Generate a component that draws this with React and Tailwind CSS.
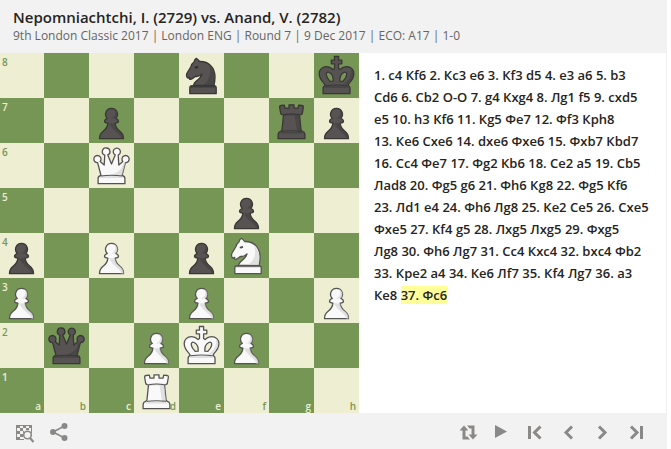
const files = ['a', 'b', 'c', 'd', 'e', 'f', 'g', 'h']

const position = {
  e8: 'bn', h8: 'bk', c7: 'bp', g7: 'br', h7: 'bp', c6: 'wq', f5: 'bp',
  a4: 'bp', c4: 'wp', e4: 'bp', f4: 'wn', a3: 'wp', e3: 'wp', h3: 'wp',
  b2: 'bq', d2: 'wp', e2: 'wk', f2: 'wp', d1: 'wr',
}

const moves = [
  '1. c4 Кf6 2. Кc3 e6 3. Кf3 d5 4. e3 a6 5. b3',
  'Сd6 6. Сb2 O-O 7. g4 Кxg4 8. Лg1 f5 9. cxd5',
  'e5 10. h3 Кf6 11. Кg5 Фe7 12. Фf3 Крh8',
  '13. Кe6 Сxe6 14. dxe6 Фxe6 15. Фxb7 Кbd7',
  '16. Сc4 Фe7 17. Фg2 Кb6 18. Сe2 a5 19. Сb5',
  'Лad8 20. Фg5 g6 21. Фh6 Кg8 22. Фg5 Кf6',
  '23. Лd1 e4 24. Фh6 Лg8 25. Кe2 Сe5 26. Сxe5',
  'Фxe5 27. Кf4 g5 28. Лxg5 Лxg5 29. Фxg5',
  'Лg8 30. Фh6 Лg7 31. Сc4 Кxc4 32. bxc4 Фb2',
  '33. Крe2 a4 34. Кe6 Лf7 35. Кf4 Лg7 36. a3',
]

// piece outlines on a 45x45 square
const shapes = {
  p: {
    body: 'M22.5 10.3a5.9 5.9 0 0 1 4.2 10.1c1.8.8 2.8 1.8 2.8 2.9 0 1-1 1.6-3.4 1.8.3 4 2 6 4.8 8.2 2.6 2 3.7 4.3 3.6 7.4H10.5c-.1-3.1 1-5.4 3.6-7.4 2.8-2.2 4.5-4.2 4.8-8.2-2.4-.2-3.4-.8-3.4-1.8 0-1.1 1-2.1 2.8-2.9a5.900 5.900 0 0 1 4.200-10.100z',
    shade: 'M20 25.200h6.100c.3 4 2 6 4.800 8.100 2.600 2 3.700 4.300 3.600 7.400h-2c-.5-5-8-6.500-12.500-15.500zM25 11c3 4 1 8-3 9.500h4.700c3-3 2-8-1.700-9.500z',
  },
  n: {
    body: 'M17.300 5.300c1.500.9 2.700 2 3.300 3.200C30 8.300 36 14.500 36 24c0 3.500-.4 6-1 8.500H14.500c.2-4.500 7.500-6 8.500-11.700-1.800 2.200-4.300 3-6.700 2.600-1.500 1.200-2.600 2.600-4.600 3-1.200.2-1.600-.9-1-2l-1.500.7c-1.400-.5-2-2.300-1.400-4.600l4.200-7c.5-2.500 1.500-3.500 3-4.500.3-1.600 1-3 2.300-3.700zM12 33h24c1 0 1.200 1 1.200 2.500v5.200H10.800v-5.200C10.800 34 11 33 12 33z',
    shade: 'M30 12.500C32.500 20 31 27 24 32h10.500c2-8 1-15-4.500-19.500zM12 33.500h24v1.500H12z',
    line: 'M12 33h24',
    detail: 'M15.300 15l1.200-1.600 2.300-.4.400 1.400-1.800 1.200z',
  },
  r: {
    body: 'M12 7.500l3.300-.4.700 3h4V6.800h5v3.300h4l.7-3 3.300.4c1 .1 1.500.5 1.400 1.500l-1 6c-.2 1-.7 1.500-1.700 1.700l-1.200.2 1.500 14.600c.1 1 .6 1.700 1.700 2 2 .7 2.200 1.800 2.200 3.500v3.700H9.100V37c0-1.700.2-2.800 2.200-3.500 1.100-.3 1.600-1 1.700-2l1.500-14.600-1.200-.2c-1-.2-1.500-.7-1.700-1.700l-1-6c-.1-1 .4-1.400 1.400-1.500z',
    shade: 'M25.500 17h4.700l2 17h-4zM15 15.500h15v2H15zM12 34h21v1.500H12z',
    line: 'M15 16.800q7.500-1.500 15 0M13 33.300q9.500-1 19 0',
  },
  q: {
    body: 'M17.300 5a3.600 3.600 0 0 1 1.500 6.900l3.700 9.100 3.700-9.100a3.600 3.600 0 1 1 3 .1l.6 10 4-3.600a3.600 3.600 0 1 1 2.600 1.300L33 32.500c2.300.5 2.900 1.300 2.900 3v5.200H9.100v-5.200c0-1.700.6-2.500 2.900-3L8.600 19.700a3.600 3.600 0 1 1 2.600-1.300l4 3.600.6-10A3.600 3.600 0 0 1 17.300 5z',
    shade: 'M34 20c-.5 6-5 10-13 12.500h12l3.400-12.800zM11 33h23v2H11z',
    line: 'M11.500 33q11-1.500 22 0',
  },
  k: {
    body: 'M20.400 3.500h4.200v3.700h3.200v3.600h-3.200v4.700l1.400 1c2-2 4-2.900 6.500-2.900 4.500 0 7.400 3 7.400 7 0 4.500-2.500 7.500-5 10l-1 2c1.800.4 2.100 1.200 2.100 3v5.100H9.100v-5.100c0-1.800.3-2.600 2.100-3l-1-2c-2.500-2.500-5-5.500-5-10 0-4 2.900-7 7.400-7 2.500 0 4.500.9 6.500 2.900l1.400-1v-4.700h-3.200V7.200h3.200zM19.200 28.200c.3-4-.8-7-4-8.700-2-.9-3.300.4-2.800 2.800.5 2.500 2 4 3.700 6zM25.800 28.200c-.3-4 .8-7 4-8.700 2-.9 3.300.4 2.800 2.800-.5 2.500-2 4-3.700 6z',
    shade: 'M37 16c1 6-2 12-8 15.500h4.500l1.500-2.500c4-4 6-9 2-13zM11 33h23v2H11z',
    line: 'M11.500 32.700q11-1.500 22 0',
  },
}

function Piece({ code }) {
  const white = code[0] === 'w'
  const shape = shapes[code[1]]
  return (
    <svg viewBox="0 0 45 45" className="block size-full" aria-hidden="true">
      <path
        d={shape.body}
        fillRule="evenodd"
        fill={white ? '#f9f9f9' : '#565352'}
        stroke={white ? '#555352' : '#393736'}
        strokeWidth="1.3"
        strokeLinejoin="round"
      />
      <path d={shape.shade} fill={white ? '#d5d5d5' : '#454241'} opacity="0.7" />
      {shape.line && (
        <path d={shape.line} fill="none" stroke={white ? '#555352' : '#393736'} strokeWidth="1.1" />
      )}
      {shape.detail && <path d={shape.detail} fill={white ? '#4b4847' : '#2b2928'} />}
    </svg>
  )
}

function Board() {
  return (
    <div className="-ml-px grid w-[360px] shrink-0 grid-cols-8">
      {[8, 7, 6, 5, 4, 3, 2, 1].map((rank) =>
        files.map((file, i) => {
          const light = (i + rank) % 2 === 0
          const code = position[file + rank]
          return (
            <div
              key={file + rank}
              className={`relative aspect-square text-[10px] font-semibold leading-3 ${
                light ? 'bg-[#eeeed2] text-[#769656]' : 'bg-[#769656] text-[#eeeed2]'
              }`}
            >
              {code && (
                <div className="absolute inset-0">
                  <Piece code={code} />
                </div>
              )}
              {i === 0 && <span className="absolute left-[3px] top-[3px]">{rank}</span>}
              {rank === 1 && <span className="absolute bottom-px right-[3px]">{file}</span>}
            </div>
          )
        })
      )}
    </div>
  )
}

function IconButton({ label, children }) {
  return (
    <button type="button" aria-label={label} className="flex size-6 items-center justify-center text-[#8b8987]">
      <svg width="24" height="24" viewBox="0 0 24 24" fill="currentColor">
        {children}
      </svg>
    </button>
  )
}

function Toolbar() {
  return (
    <footer className="flex h-9 items-center justify-between pl-3 pr-[19px]">
      <div className="flex gap-3">
        <IconButton label="Analysis">
          <path d="M4 6h16v8h-1V7H5v13h7v1H4z" />
          <path d="M4 6h4v3H4zM11 6h3v3h-3zM17 6h3v3h-3zM8 9h3v3H8zM14 9h3v2h-3zM5 12h3v3H5zM8 15h3v3H8zM5 18h3v3H5zM11 12h1v2h-1z" />
          <circle cx="15.5" cy="16" r="3.8" fill="#f2f2f2" stroke="currentColor" strokeWidth="1.6" />
          <path d="M18 19l3.500 4" stroke="currentColor" strokeWidth="2" />
        </IconButton>
        <IconButton label="Share">
          <path d="M16.500 7L5 13l11.500 6" fill="none" stroke="currentColor" strokeWidth="1.6" />
          <circle cx="16.500" cy="7" r="3" />
          <circle cx="5" cy="13" r="3" />
          <circle cx="16.500" cy="19" r="3" />
        </IconButton>
      </div>
      <div className="flex gap-2.5">
        <IconButton label="Flip board">
          <path d="M5.500 11.500L10 6.500l4 4.500v.5h-2.500v6h2l2.500 3H8.500v-9zM23.500 15.500L19 20.500l-4.500-5h3v-6h-2L13 6.500h7.500v9z" />
        </IconButton>
        <IconButton label="Play">
          <path d="M7 6l12 6.500L7 19z" />
        </IconButton>
        <IconButton label="First move">
          <path d="M7.500 7v13M18.500 7.500l-6 6 6 6" fill="none" stroke="currentColor" strokeWidth="3" />
        </IconButton>
        <IconButton label="Previous move">
          <path d="M16 7.500l-6 6 6 6" fill="none" stroke="currentColor" strokeWidth="3" />
        </IconButton>
        <IconButton label="Next move">
          <path d="M9 7.500l6 6-6 6" fill="none" stroke="currentColor" strokeWidth="3" />
        </IconButton>
        <IconButton label="Last move">
          <path d="M7 7.500l6 6-6 6M17.500 7v13" fill="none" stroke="currentColor" strokeWidth="3" />
        </IconButton>
      </div>
    </footer>
  )
}

export default function App() {
  return (
    <div className="mr-1 bg-[#f2f2f2] font-['Open_Sans','Noto_Sans',sans-serif] text-[#262421]">
      <header className="pt-[7px] pb-[9px] pl-[13px]">
        <h1 className="text-[15px] font-semibold leading-5">
          Nepomniachtchi, I. (2729) vs. Anand, V. (2782)
        </h1>
        <p className="text-[12px] leading-[17px] text-[#666564]">
          9th London Classic 2017 | London ENG | Round 7 | 9 Dec 2017 | ECO: A17 | 1-0
        </p>
      </header>

      <main className="flex">
        <Board />
        <section className="mr-px flex-1 bg-white pt-[11px] pl-[15px] text-[13px] font-semibold leading-[22px] whitespace-nowrap">
          {moves.map((line) => (
            <p key={line}>{line}</p>
          ))}
          <p>
            Кe8 <mark className="bg-[#ffff99] text-inherit">37. Фc6</mark>
          </p>
        </section>
      </main>

      <Toolbar />
    </div>
  )
}
